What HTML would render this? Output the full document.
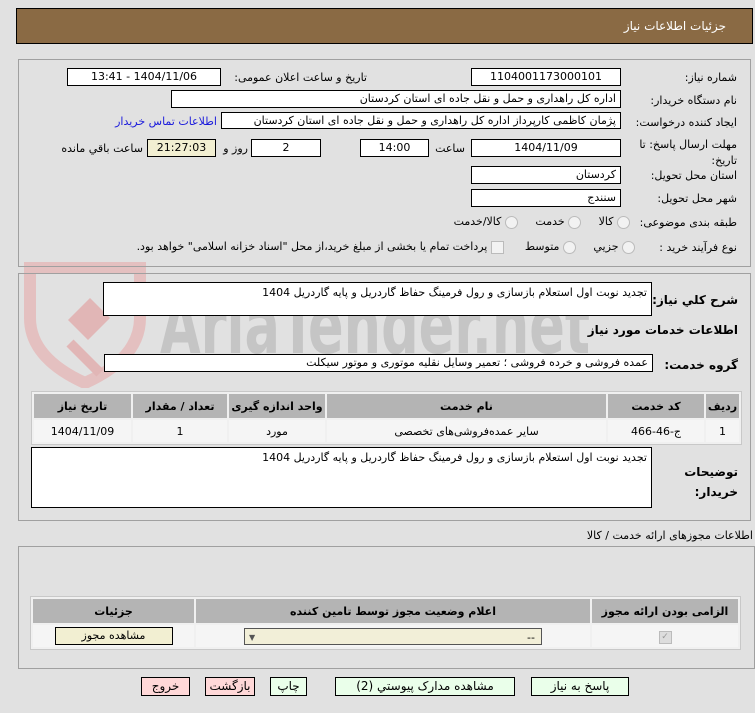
<!DOCTYPE html>
<html><head><meta charset="utf-8"><style>
body{margin:0;width:755px;height:713px;background:#e1e1e1;font-family:"DejaVu Sans","Liberation Sans",sans-serif;font-size:11px;color:#000;position:relative;overflow:hidden}
.a{position:absolute}
.r{position:absolute;direction:rtl;white-space:nowrap}
.in{position:absolute;background:#fff;border:1px solid #000;box-sizing:border-box;direction:rtl;white-space:nowrap;padding:0 4px;line-height:16px;overflow:hidden}
.c{text-align:center}
.panel{position:absolute;border:1px solid #a0a0a0;box-sizing:border-box}
table{border-collapse:separate;border-spacing:2px;position:absolute;direction:rtl;background:#f0f0f0;border:1px solid #c8c8c8}
th{background:#b4b4b4;font-weight:bold;height:22px;font-size:11px}
td{background:#f5f5f5;text-align:center;height:20px}
.btn{position:absolute;border:1px solid #000;box-sizing:border-box;background:#eaffea;text-align:center;line-height:17px;direction:rtl;font-size:12px}
.radio{display:inline-block;width:11px;height:11px;border:1px solid #bbb;border-radius:50%;background:#f2f2f2;vertical-align:middle}
</style></head><body>
<div class="a" style="left:16px;top:8px;width:737px;height:36px;background:#8a6a44;border:1px solid #000;box-sizing:border-box"></div>
<div class="r" style="right:29px;top:19px;color:#fff;font-size:12px">جزئیات اطلاعات نیاز</div>

<!-- watermark -->
<svg class="a" style="left:20px;top:258px;opacity:0.75" width="600" height="130">
<path d="M10 10 L120 10 L120 60 Q120 100 65 125 Q10 100 10 60 Z" fill="none" stroke="#e6b5b5" stroke-width="12"/>
<path d="M48 62 L70 40 L90 60 L68 82 Z" fill="#e2a8a8"/>
<path d="M50 85 L80 115" stroke="#e2a8a8" stroke-width="10"/>
<text x="140" y="95" font-family="DejaVu Sans Condensed,Liberation Sans Narrow,sans-serif" font-weight="bold" font-size="78" fill="#bcbcbc" textLength="430" lengthAdjust="spacingAndGlyphs">AriaTender.net</text>
</svg>

<div class="panel" style="left:18px;top:59px;width:733px;height:208px"></div>
<div class="r" style="right:18px;top:71px">شماره نیاز:</div>
<div class="in c" style="left:471px;top:68px;width:150px;height:18px">1104001173000101</div>
<div class="r" style="right:388px;top:71px">تاریخ و ساعت اعلان عمومی:</div>
<div class="in c" style="left:67px;top:68px;width:154px;height:18px">1404/11/06 - 13:41</div>
<div class="r" style="right:18px;top:94px">نام دستگاه خریدار:</div>
<div class="in" style="left:171px;top:90px;width:450px;height:18px">اداره کل راهداری و حمل و نقل جاده ای استان کردستان</div>
<div class="r" style="right:18px;top:116px">ایجاد کننده درخواست:</div>
<div class="in" style="left:221px;top:112px;width:400px;height:17px">پژمان کاظمی کارپرداز اداره کل راهداری و حمل و نقل جاده ای استان کردستان</div>
<div class="r" style="right:538px;top:115px;color:#1a1adc">اطلاعات تماس خریدار</div>
<div class="r" style="right:18px;top:137px;line-height:16px;white-space:normal;width:110px">مهلت ارسال پاسخ: تا تاریخ:</div>
<div class="in c" style="left:471px;top:139px;width:150px;height:18px">1404/11/09</div>
<div class="r" style="right:290px;top:142px">ساعت</div>
<div class="in c" style="left:360px;top:139px;width:69px;height:18px">14:00</div>
<div class="in c" style="left:251px;top:139px;width:70px;height:18px">2</div>
<div class="r" style="right:507px;top:142px">روز و</div>
<div class="in c" style="left:147px;top:139px;width:69px;height:18px;background:#f2efd2">21:27:03</div>
<div class="r" style="right:612px;top:142px">ساعت باقي مانده</div>
<div class="r" style="right:18px;top:169px">استان محل تحویل:</div>
<div class="in" style="left:471px;top:166px;width:150px;height:18px">کردستان</div>
<div class="r" style="right:18px;top:192px">شهر محل تحویل:</div>
<div class="in" style="left:471px;top:189px;width:150px;height:18px">سنندج</div>
<div class="r" style="right:18px;top:216px">طبقه بندی موضوعی:</div>
<div class="r" style="right:125px;top:215px"><span class="radio"></span> کالا &nbsp;&nbsp;&nbsp; <span class="radio"></span> خدمت &nbsp;&nbsp;&nbsp; <span class="radio"></span> کالا/خدمت</div>
<div class="r" style="right:18px;top:241px">نوع فرآیند خرید :</div>
<div class="r" style="right:120px;top:240px"><span class="radio"></span> جزیي &nbsp;&nbsp;&nbsp; <span class="radio"></span> متوسط &nbsp;&nbsp;&nbsp;&nbsp; <span style="display:inline-block;width:11px;height:11px;border:1px solid #bbb;background:#f2f2f2;vertical-align:middle"></span> پرداخت تمام یا بخشی از مبلغ خرید،از محل "اسناد خزانه اسلامی" خواهد بود.</div>

<div class="panel" style="left:18px;top:273px;width:733px;height:248px"></div>
<div class="r" style="right:17px;top:293px;font-weight:bold;font-size:12px">شرح کلي نیاز:</div>
<div class="in" style="left:103px;top:282px;width:549px;height:34px;line-height:20px">تجدید نوبت اول استعلام بازسازی و رول فرمینگ حفاظ گاردریل و پایه گاردریل 1404</div>
<div class="r" style="right:17px;top:323px;font-weight:bold;font-size:12px">اطلاعات خدمات مورد نیاز</div>
<div class="r" style="right:17px;top:358px;font-weight:bold;font-size:12px">گروه خدمت:</div>
<div class="in" style="left:104px;top:354px;width:549px;height:18px">عمده فروشی و خرده فروشی ؛ تعمیر وسایل نقلیه موتوری و موتور سیکلت</div>
<table style="left:31px;top:391px;width:711px">
<tr><th style="width:31px">ردیف</th><th style="width:94px">کد خدمت</th><th>نام خدمت</th><th style="width:94px">واحد اندازه گیری</th><th style="width:92px">تعداد / مقدار</th><th style="width:95px">تاریخ نیاز</th></tr>
<tr><td>1</td><td>ج-46-466</td><td>سایر عمده‌فروشی‌های تخصصی</td><td>مورد</td><td>1</td><td>1404/11/09</td></tr>
</table>
<div class="r" style="right:17px;top:462px;font-weight:bold;font-size:12px;line-height:20px;white-space:normal;width:60px">توضیحات خریدار:</div>
<div class="in" style="left:31px;top:447px;width:621px;height:61px;line-height:20px">تجدید نوبت اول استعلام بازسازی و رول فرمینگ حفاظ گاردریل و پایه گاردریل 1404</div>

<div class="r" style="right:2px;top:529px">اطلاعات مجوزهای ارائه خدمت / کالا</div>
<div class="panel" style="left:18px;top:546px;width:737px;height:123px"></div>
<table style="left:30px;top:596px;width:711px">
<tr><th style="width:144px">الزامی بودن ارائه مجوز</th><th>اعلام وضعیت مجوز توسط تامین کننده</th><th style="width:159px">جزئیات</th></tr>
<tr><td><span style="display:inline-block;width:11px;height:11px;background:#ddd;border:1px solid #bbb;font-size:9px;line-height:11px;color:#999">✓</span></td><td><div style="position:relative;margin:0 auto;width:298px;height:17px;border:1px solid #555;background:#f2efd8;text-align:right;line-height:17px;box-sizing:border-box;padding-right:6px">--<span style="position:absolute;left:4px;top:0;font-size:8px;color:#555">▼</span></div></td><td><div style="margin:0 auto;width:118px;height:18px;border:1px solid #000;background:#f2efd2;line-height:16px;box-sizing:border-box">مشاهده مجوز</div></td></tr>
</table>

<div class="btn" style="left:531px;top:677px;width:98px;height:19px">پاسخ به نیاز</div>
<div class="btn" style="left:335px;top:677px;width:180px;height:19px">مشاهده مدارک پیوستي (2)</div>
<div class="btn" style="left:270px;top:677px;width:37px;height:19px">چاپ</div>
<div class="btn" style="left:205px;top:677px;width:50px;height:19px;background:#ffd8d8">بازگشت</div>
<div class="btn" style="left:141px;top:677px;width:49px;height:19px;background:#ffd8d8">خروج</div>
</body></html>
